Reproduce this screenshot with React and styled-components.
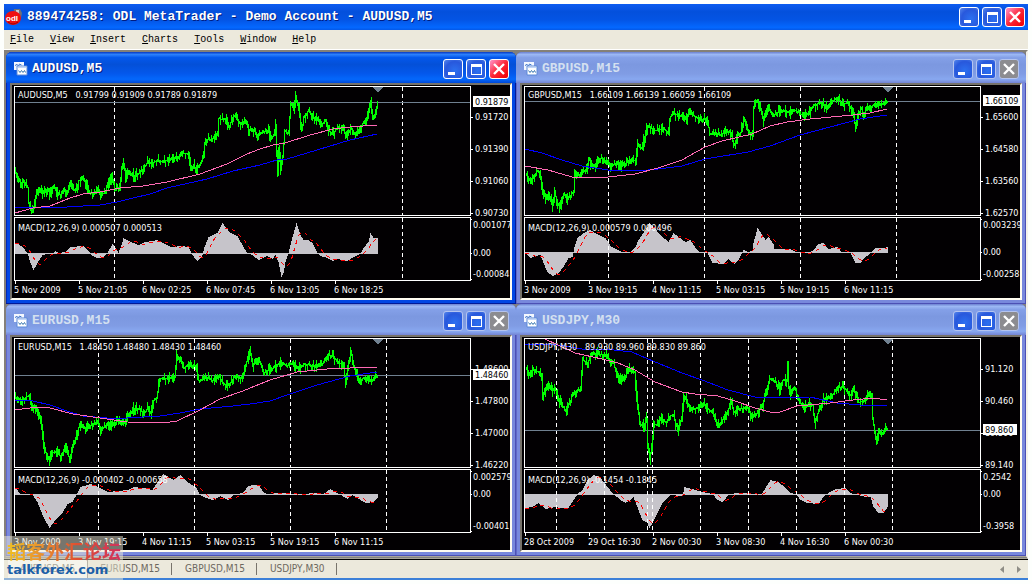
import { useState } from 'react';
import styled, { createGlobalStyle } from 'styled-components';


// all chart points are [x, y], counted from the top left corner of the price plot
const charts = [
    {
        symbol: 'AUDUSD',
        period: 'M5',
        quotes: '0.91799 0.91909 0.91789 0.91879',
        macd: '0.000507 0.000513',
        price: '0.91879',
        priceY: 16,
        scale: ['0.91720', '0.91390', '0.91060', '0.90730'],
        macdMax: '0.001077',
        macdMin: '-0.00084',
        zeroY: 167,
        dates: ['5 Nov 2009', '5 Nov 21:05', '6 Nov 02:25', '6 Nov 07:45', '6 Nov 13:05', '6 Nov 18:25'],
        separators: [100, 388],
        bars: [[1,86],[3,91],[6,97],[9,94],[11,97],[13,101],[14,117],[16,122],[19,121],[22,106],[25,104],[29,107],[33,102],[36,109],[39,99],[43,107],[46,109],[49,102],[53,106],[55,96],[59,104],[62,101],[64,94],[68,92],[71,97],[74,106],[79,107],[83,104],[86,108],[90,106],[94,96],[97,91],[100,102],[105,102],[107,82],[109,77],[111,91],[114,86],[119,89],[124,87],[128,83],[133,76],[138,77],[143,73],[146,75],[153,74],[158,71],[163,71],[168,67],[174,67],[176,82],[179,79],[181,84],[186,76],[189,69],[190,57],[193,53],[196,54],[199,51],[203,47],[204,32],[208,33],[211,32],[214,41],[218,31],[221,29],[224,36],[228,37],[231,34],[234,44],[239,44],[243,49],[246,46],[253,44],[256,51],[259,49],[261,39],[263,89],[264,61],[266,82],[268,71],[270,44],[274,47],[276,17],[279,22],[281,10],[284,22],[287,44],[289,31],[294,24],[299,31],[303,32],[306,39],[311,34],[314,44],[318,47],[323,41],[328,42],[332,51],[336,41],[340,47],[344,44],[348,37],[351,34],[354,24],[356,14],[358,32],[361,27],[363,15]],
        fast: [[1,127],[19,122],[36,120],[56,112],[69,108],[86,106],[106,102],[129,100],[153,96],[186,88],[213,78],[233,68],[246,63],[259,59],[271,57],[296,49],[319,43],[336,41],[363,39]],
        slow: [[1,121],[19,121],[53,121],[86,119],[103,116],[119,112],[136,108],[153,102],[193,93],[219,85],[246,79],[263,74],[273,73],[303,64],[336,54],[363,48]],
        histogram: [[1,157],[4,158],[9,162],[13,167],[16,177],[19,184],[23,177],[28,169],[39,167],[41,165],[44,167],[51,166],[56,161],[69,160],[74,165],[78,170],[83,172],[89,171],[93,167],[98,158],[101,162],[104,167],[107,159],[109,152],[114,155],[124,159],[131,156],[143,154],[149,157],[156,161],[168,160],[174,161],[177,167],[181,173],[183,175],[186,172],[188,169],[190,161],[194,151],[203,147],[208,137],[211,141],[216,147],[223,150],[229,161],[233,167],[238,169],[244,174],[253,170],[258,173],[261,169],[264,176],[267,191],[269,187],[271,176],[274,167],[278,151],[282,137],[286,149],[289,154],[294,154],[298,157],[303,167],[306,170],[313,172],[318,175],[323,173],[333,175],[339,171],[346,168],[349,162],[354,156],[356,147],[359,152],[363,152]],
    },
    {
        symbol: 'GBPUSD',
        period: 'M15',
        quotes: '1.66109 1.66139 1.66059 1.66109',
        macd: '0.000579 0.000496',
        price: '1.66109',
        priceY: 15,
        scale: ['1.65600', '1.64580', '1.63560', '1.62570'],
        macdMax: '0.003239',
        macdMin: '-0.00258',
        zeroY: 166,
        dates: ['3 Nov 2009', '3 Nov 19:15', '4 Nov 11:15', '5 Nov 03:15', '5 Nov 19:15', '6 Nov 11:15'],
        separators: [84, 180, 276, 372],
        bars: [[2,87],[4,94],[8,91],[13,84],[16,91],[18,104],[21,112],[24,109],[28,119],[30,107],[33,117],[36,121],[39,107],[43,112],[46,109],[49,104],[50,84],[54,89],[58,86],[62,82],[64,71],[68,82],[73,76],[77,71],[81,76],[86,80],[91,77],[96,80],[101,77],[106,74],[111,74],[113,59],[117,61],[119,54],[123,39],[129,44],[134,44],[138,41],[144,47],[145,32],[148,26],[153,29],[159,29],[162,34],[164,23],[166,27],[174,32],[183,34],[185,47],[191,47],[196,49],[200,44],[206,46],[209,59],[213,49],[216,46],[219,32],[223,44],[228,49],[229,21],[231,14],[234,17],[239,34],[243,19],[248,29],[256,24],[266,26],[271,24],[278,29],[284,26],[289,19],[296,16],[303,21],[308,14],[313,12],[318,18],[323,16],[328,26],[331,42],[334,27],[337,21],[339,31],[341,21],[346,21],[351,17],[358,17],[363,15]],
        fast: [[1,80],[24,84],[48,91],[64,92],[84,91],[111,88],[134,82],[158,74],[181,61],[198,55],[228,48],[246,40],[263,36],[286,33],[329,29],[346,27],[363,23]],
        slow: [[1,63],[18,67],[38,74],[58,80],[84,84],[114,85],[134,83],[158,80],[181,73],[224,66],[246,60],[276,49],[306,41],[336,33],[363,29]],
        histogram: [[1,167],[6,172],[11,170],[16,169],[19,177],[23,186],[28,190],[34,187],[39,181],[44,172],[48,171],[50,161],[53,152],[59,147],[66,144],[74,149],[81,152],[86,160],[91,163],[98,166],[106,166],[111,161],[114,154],[121,144],[125,137],[129,141],[136,149],[144,156],[149,147],[154,151],[161,156],[166,154],[171,162],[176,167],[183,167],[188,177],[199,178],[204,173],[210,178],[214,174],[219,164],[224,166],[228,164],[229,157],[233,142],[236,146],[241,154],[244,151],[249,158],[250,163],[266,163],[273,167],[284,167],[289,164],[294,158],[299,157],[304,163],[313,161],[318,167],[326,167],[331,177],[336,177],[339,173],[346,167],[351,162],[359,162],[363,161]],
    },
    {
        symbol: 'EURUSD',
        period: 'M15',
        quotes: '1.48450 1.48480 1.48430 1.48460',
        macd: '-0.000402 -0.000658',
        price: '1.48460',
        priceY: 37,
        scale: ['1.48600', '1.47800', '1.47000', '1.46220'],
        macdMax: '0.002579',
        macdMin: '-0.00401',
        zeroY: 156,
        dates: ['3 Nov 2009', '3 Nov 19:15', '4 Nov 11:15', '5 Nov 03:15', '5 Nov 19:15', '6 Nov 11:15'],
        separators: [84, 180, 276, 372],
        bars: [[1,59],[6,62],[11,59],[14,57],[17,67],[21,70],[25,79],[28,95],[29,110],[35,122],[38,114],[43,112],[46,120],[51,105],[55,122],[58,109],[61,99],[65,85],[69,90],[74,89],[78,85],[83,85],[86,92],[91,87],[98,87],[103,82],[109,85],[114,77],[119,70],[124,70],[129,75],[133,70],[136,75],[139,62],[142,59],[145,40],[153,40],[160,38],[162,17],[166,22],[169,30],[174,25],[182,29],[184,42],[191,39],[198,42],[204,37],[208,45],[214,47],[219,39],[228,39],[231,27],[235,12],[238,27],[243,20],[246,25],[249,35],[253,32],[258,30],[264,25],[273,27],[278,25],[284,30],[289,26],[303,27],[308,25],[313,17],[318,17],[323,24],[326,25],[329,29],[331,46],[333,32],[336,12],[339,27],[342,35],[344,42],[349,40],[353,39],[357,42],[361,37],[363,38]],
        fast: [[1,72],[23,69],[36,70],[59,76],[86,80],[113,84],[149,85],[163,83],[186,72],[206,61],[229,53],[236,50],[256,42],[283,34],[313,31],[336,30],[363,29]],
        slow: [[1,62],[19,63],[36,67],[53,73],[69,78],[93,80],[113,80],[146,78],[166,75],[186,71],[219,68],[236,66],[256,63],[276,56],[303,47],[336,38],[363,34]],
        histogram: [[1,150],[6,156],[18,157],[23,164],[29,179],[35,190],[41,182],[48,175],[53,166],[58,164],[63,155],[66,149],[76,146],[84,149],[93,154],[103,153],[113,152],[119,149],[129,150],[138,152],[143,144],[149,136],[154,139],[159,142],[166,137],[173,144],[182,150],[185,156],[189,159],[198,162],[206,158],[214,162],[219,157],[228,155],[234,148],[239,147],[244,147],[249,154],[253,156],[266,155],[286,156],[303,155],[309,156],[316,151],[321,154],[325,156],[333,161],[338,157],[343,160],[351,165],[359,164],[363,160]],
    },
    {
        symbol: 'USDJPY',
        period: 'M30',
        quotes: '89.930 89.960 89.830 89.860',
        macd: '-0.1454 -0.1845',
        price: '89.860',
        priceY: 92,
        scale: ['91.120', '90.460', '89.800', '89.140'],
        macdMax: '0.2542',
        macdMin: '-0.3958',
        zeroY: 156,
        dates: ['28 Oct 2009', '29 Oct 16:30', '2 Nov 00:30', '3 Nov 08:30', '4 Nov 16:30', '6 Nov 00:30'],
        separators: [32, 80, 123, 128, 176, 224, 272, 320, 368],
        bars: [[2,29],[4,37],[8,30],[14,34],[17,37],[18,57],[23,47],[28,52],[32,52],[34,62],[41,72],[46,62],[48,54],[56,50],[58,22],[63,24],[66,17],[73,15],[81,17],[84,22],[89,25],[93,39],[98,42],[101,37],[104,30],[110,34],[112,59],[115,85],[119,87],[122,80],[123,105],[125,121],[127,109],[129,85],[133,87],[136,79],[141,84],[146,77],[149,77],[153,92],[157,79],[159,57],[162,62],[166,72],[173,69],[178,65],[183,70],[188,74],[194,89],[199,79],[203,74],[206,62],[209,74],[214,70],[224,70],[227,79],[233,74],[238,67],[241,54],[245,40],[250,42],[255,52],[258,42],[262,42],[263,23],[264,50],[266,55],[270,49],[274,62],[279,69],[284,65],[288,67],[290,84],[294,72],[299,60],[306,59],[313,49],[319,48],[325,57],[329,52],[334,64],[339,62],[344,55],[347,55],[348,80],[350,94],[352,102],[354,92],[358,95],[361,89],[363,90]],
        fast: [[21,1],[34,7],[51,15],[78,21],[94,25],[111,32],[131,44],[158,54],[171,56],[194,58],[211,63],[231,70],[246,74],[256,74],[273,68],[306,65],[329,62],[349,60],[363,62]],
        slow: [[1,6],[24,6],[41,8],[58,11],[81,11],[108,14],[124,21],[158,35],[178,42],[204,52],[231,59],[251,60],[286,59],[313,65],[336,67],[363,68]],
        histogram: [[1,170],[8,169],[14,165],[21,171],[31,169],[43,171],[46,167],[49,162],[54,155],[58,152],[63,142],[69,137],[76,140],[83,149],[89,156],[96,162],[101,165],[106,162],[109,159],[114,172],[118,182],[123,185],[125,190],[128,185],[133,175],[138,165],[146,157],[158,158],[160,149],[168,151],[178,154],[188,156],[193,162],[198,164],[204,157],[211,155],[224,155],[229,156],[237,156],[241,150],[246,142],[254,144],[261,150],[266,155],[272,156],[276,162],[283,165],[294,166],[299,159],[304,155],[311,151],[321,150],[326,155],[334,157],[341,159],[346,159],[349,169],[354,175],[359,175],[363,169]],
    },
];

const menu = ['File', 'View', 'Insert', 'Charts', 'Tools', 'Window', 'Help'];
const tabs = ['AUDUSD,M5', 'EURUSD,M15', 'GBPUSD,M15', 'USDJPY,M30'];

const valueAt = (points, x) => {
    const next = points.findIndex((p) => p[0] >= x);
    if (next === 0) return points[0][1];
    if (next === -1) return points[points.length - 1][1];
    const [x1, y1] = points[next - 1];
    const [x2, y2] = points[next];
    return y1 + ((y2 - y1) * (x - x1)) / (x2 - x1);
};

// length of the wick of a bar, the same on every render
const wick = (n) => {
    const r = Math.abs(Math.sin(n * 12.9898) * 43758.5453) % 1;
    return Math.round(r * r * 6);
};

const barsPath = (points) => {
    let d = '';
    for (let x = points[0][0]; x <= 363; x++) {
        const a = Math.round(valueAt(points, x - 1));
        const b = Math.round(valueAt(points, x));
        const top = Math.min(a, b) - wick(x);
        const bottom = Math.max(a, b) + 1 + wick(x + 500);
        d += `M${x} ${Math.max(top, 1)}h1V${Math.min(bottom, 128)}h-1z`;
    }
    return d;
};

const histogramPath = (points, zeroY) => {
    let d = '';
    for (let x = 1; x <= 363; x++) {
        const y = Math.round(valueAt(points, x));
        d += `M${x} ${Math.min(y, zeroY)}h1V${Math.max(y, zeroY + 1)}h-1z`;
    }
    return d;
};

const signalPath = (points) => {
    const list = [];
    for (let x = 1; x <= 363; x += 2) {
        let sum = 0;
        for (let i = 0; i < 12; i++) sum += valueAt(points, Math.max(1, x - i));
        list.push(`${x},${Math.round(sum / 12)}`);
    }
    return list.join(' ');
};

const Chart = ({ chart }) => {
    const priceLabelWidth = chart.price.length > 6 ? 38 : 34;

    return (
        <ChartSvg viewBox="-2 -1 498 213" role="img" aria-label={`${chart.symbol},${chart.period}`}>
            <g shapeRendering="crispEdges" fill="none">
                <path d={histogramPath(chart.histogram, chart.zeroY)} fill="#c6c4ca" />
                <polyline points={signalPath(chart.histogram)} stroke="#ff0000" strokeDasharray="4 4" />
                {chart.separators.map((x) => (
                    <path key={x} d={`M${x + 0.5} 1V129M${x + 0.5} 132V194`} stroke="#ffffff" strokeDasharray="4 3" />
                ))}
                <path d={`M1 ${chart.priceY + 0.5}H456`} stroke="#708090" />
                <path d={barsPath(chart.bars)} fill="#00ff00" />
                <polyline points={chart.slow.join(' ')} stroke="#0000ff" />
                <polyline points={chart.fast.join(' ')} stroke="#ff69b4" />
                <path d="M358 1h11l-5 5h-1z" fill="#708090" />
                <rect x="0.5" y="0.5" width="456" height="129" stroke="#ffffff" />
                <rect x="0.5" y="131.5" width="456" height="63" stroke="#ffffff" />
                <path d={`M457 31.5h2M457 63.5h2M457 95.5h2M457 127.5h2M457 133.5h1M457 ${chart.zeroY + 0.5}h1M457 193.5h1`} stroke="#ffffff" />
                {chart.dates.map((date, i) => (
                    <path key={date} d={`M${i * 64 + 1.5} 195v3`} stroke="#ffffff" />
                ))}
            </g>

            <ChartText x="4" y="12">{chart.symbol},{chart.period}{'\u00a0\u00a0\u00a0'}{chart.quotes}</ChartText>
            <ChartText x="4" y="145">MACD(12,26,9) {chart.macd}</ChartText>

            {chart.scale.map((label, i) => (
                <ChartText key={label} x="461" y={34 + i * 32}>{label}</ChartText>
            ))}
            <ChartText x="459" y="142">{chart.macdMax}</ChartText>
            <ChartText x="459" y={chart.zeroY + 3}>0.00</ChartText>
            <ChartText x="459" y="191">{chart.macdMin}</ChartText>
            {chart.dates.map((date, i) => (
                <ChartText key={date} x={i * 64} y="207">{date}</ChartText>
            ))}

            <rect x="459" y={chart.priceY - 6} width={priceLabelWidth} height="11" fill="#ffffff" />
            <ChartText x="461" y={chart.priceY + 3} $dark>{chart.price}</ChartText>
        </ChartSvg>
    );
};

const Controls = ({ name, active }) => (
    <ButtonRow>
        <CaptionButton type="button" aria-label={`Minimize ${name}`} $active={active}>
            <svg width="18" height="18"><path d="M4 12h7v3H4z" fill="#fff" /></svg>
        </CaptionButton>
        <CaptionButton type="button" aria-label={`Maximize ${name}`} $active={active}>
            <svg width="18" height="18"><path fillRule="evenodd" d="M4 4h11v11H4zM5 7v7h9V7z" fill="#fff" /></svg>
        </CaptionButton>
        <CaptionButton type="button" aria-label={`Close ${name}`} $active={active} $close>
            <svg width="18" height="18"><path d="M4 4l10 10M14 4L4 14" stroke="#fff" strokeWidth="2.4" /></svg>
        </CaptionButton>
    </ButtonRow>
);

const ChartIcon = () => (
    <svg width="14" height="14" aria-hidden="true">
        <path d="M0 0h10v8H0z" fill="#f4f8ff" />
        <path d="M1.5 4l1-2 2 2 1-2 2 1" stroke="#3f74c8" fill="none" />
        <path d="M3 4h10v9H3z" fill="#fff" stroke="#5c8ad8" />
        <path d="M4 5h8v1H4z" fill="#c4d8f8" />
        <path d="M4.5 8.5l1.5 2 1.5-2 1.5 2 1.5-2 1 2" stroke="#3a78b0" fill="none" />
    </svg>
);

const AppIcon = () => (
    <svg width="18" height="18" aria-hidden="true">
        <path d="M9 1h6l2 4-1 5-4 2-4-3z" fill="#6c7078" />
        <path d="M11 2l3 0 0 4-3 1z" fill="#c8ccd0" />
        <ellipse cx="8" cy="10" rx="8" ry="7" fill="#f01010" />
        <path d="M3 14q5 4 10 0" stroke="#a00000" fill="none" />
        <AppIconText x="1" y="13">odl</AppIconText>
    </svg>
);

const App = () => {
    const [activeTab, setActiveTab] = useState('AUDUSD,M5');

    return (
        <>
            <GlobalStyle />
            <Page>
                <AppTitle>
                    <AppIcon />
                    <AppName>889474258: ODL MetaTrader - Demo Account - AUDUSD,M5</AppName>
                    <Controls name="ODL MetaTrader" active />
                </AppTitle>

                <Menu>
                    {menu.map((item) => (
                        <MenuItem key={item} type="button"><u>{item[0]}</u>{item.slice(1)}</MenuItem>
                    ))}
                </Menu>

                <Workspace>
                    {charts.map((chart) => {
                        const name = `${chart.symbol},${chart.period}`;
                        const active = name === activeTab;
                        return (
                            <Window key={name} $active={active}>
                                <WindowTitle $active={active}>
                                    <ChartIcon />
                                    <WindowName $active={active}>{name}</WindowName>
                                    <Controls name={name} active={active} />
                                </WindowTitle>
                                <ChartFrame>
                                    <Chart chart={chart} />
                                </ChartFrame>
                            </Window>
                        );
                    })}
                </Workspace>

                <TabBar>
                    {tabs.map((tab) => (
                        <Tab key={tab} type="button" $active={tab === activeTab} onClick={() => { setActiveTab(tab) }}>{tab}</Tab>
                    ))}
                    <Scroll>
                        <ScrollButton type="button" aria-label="Scroll left">
                            <svg width="4" height="7"><path d="M4 0v7L0 3.5z" fill="#8f8d86" /></svg>
                        </ScrollButton>
                        <ScrollButton type="button" aria-label="Scroll right">
                            <svg width="4" height="7"><path d="M0 0v7l4-3.5z" fill="#8f8d86" /></svg>
                        </ScrollButton>
                    </Scroll>
                </TabBar>

                <Watermark>
                    <WatermarkName>韬客外汇论坛</WatermarkName>
                    <WatermarkSite>talkforex.com</WatermarkSite>
                </Watermark>
            </Page>
        </>
    );
};

const GlobalStyle = createGlobalStyle`
* {
box-sizing: border-box;
}

body {
margin: 0;
background: #fdfffd;
}
`;

const Page = styled.div`
position: relative;
padding: 4px;
`;

const AppTitle = styled.header`
display: flex;
align-items: center;
gap: 4px;
height: 26px;
padding: 0 3px 0 1px;
background: linear-gradient(#0c5cf0 0%, #0450dc 30%, #0454e4 60%, #0468ff 90%, #0458e8 100%);
`;

const AppName = styled.h1`
flex: 1;
min-width: 0;
margin: 0;
overflow: hidden;
white-space: nowrap;
font-family: 'Liberation Mono', monospace;
font-size: 13px;
line-height: 16px;
font-weight: 700;
color: #ffffff;
text-shadow: 1px 1px #001c80;
`;

const AppIconText = styled.text`
font-family: 'Liberation Sans', sans-serif;
font-size: 8px;
font-weight: 700;
fill: #ffffff;
`;

const Menu = styled.nav`
display: flex;
align-items: center;
height: 20px;
background: #ece9dc;
border-bottom: 1px solid #ffffff;
`;

const MenuItem = styled.button`
margin: 0;
padding: 0 10px 0 6px;
border: 0;
background: none;
font-family: 'Liberation Mono', monospace;
font-size: 10px;
line-height: 16px;
color: #000000;
`;

const Workspace = styled.main`
display: grid;
grid-template-columns: repeat(2, minmax(0, 1fr));
background: #808080;
border: 2px solid #848078;
border-right-color: #f4f2ea;
border-bottom: 3px double #a8a498;
`;

const Window = styled.section`
display: flex;
flex-direction: column;
padding: 0 4px 4px;
border-radius: 6px 6px 0 0;
background: ${(props) => props.$active ? '#0046e4' : '#7888dc'};
box-shadow: inset -1px -1px ${(props) => props.$active ? '#001a98' : '#4c50b4'}, inset 1px 0 ${(props) => props.$active ? '#0028b8' : '#6068c8'};
`;

const WindowTitle = styled.header`
display: flex;
align-items: center;
gap: 4px;
height: 31px;
margin: 0 -4px;
padding: 3px 7px 0 8px;
border-radius: 6px 6px 0 0;
background: ${(props) => props.$active
        ? 'linear-gradient(#0838c0 0%, #2c80fc 8%, #0458ec 18%, #0450d8 40%, #0458ec 70%, #0468fc 88%, #0048d8 100%)'
        : 'linear-gradient(#6c80d0 0%, #9cb8f4 8%, #84a0e8 18%, #7c98e0 40%, #809ce4 70%, #88a8f0 88%, #7484d4 100%)'};
`;

const WindowName = styled.h2`
flex: 1;
min-width: 0;
margin: 0;
overflow: hidden;
white-space: nowrap;
font-family: 'Liberation Mono', monospace;
font-size: 13px;
line-height: 16px;
font-weight: 700;
color: ${(props) => props.$active ? '#ffffff' : '#d4e0f0'};
text-shadow: ${(props) => props.$active ? '1px 1px #001c80' : 'none'};
`;

const ButtonRow = styled.div`
display: flex;
gap: 3px;
`;

const CaptionButton = styled.button`
display: flex;
align-items: center;
justify-content: center;
width: 20px;
height: 20px;
padding: 0;
border: 1px solid ${(props) => props.$active ? '#ffffff' : '#b4c4f0'};
border-radius: 3px;
background: ${(props) => {
        if (!props.$close) return 'radial-gradient(circle at 60% 60%, #2c70f0, #2858dc 60%, #5888ec)';
        return props.$active ? 'linear-gradient(135deg, #ff80b0 10%, #fc2838 50%, #f00000)' : '#8c8c90';
    }};
`;

const ChartFrame = styled.div`
border: 2px solid;
border-color: #76726a #fffcf0 #fffcf0 #76726a;
background: #000000;
`;

const ChartSvg = styled.svg`
display: block;
width: 100%;
height: auto;
background: #020002;
`;

const ChartText = styled.text`
font-family: 'DejaVu Sans Condensed', 'DejaVu Sans', sans-serif;
font-size: 9px;
fill: ${(props) => props.$dark ? '#000000' : '#ffffff'};
`;

const TabBar = styled.footer`
display: flex;
align-items: stretch;
height: 21px;
padding-left: 4px;
background: #ece9dc;
border-top: 1px solid #000000;
border-bottom: 2px solid #3c80d8;
`;

const Tab = styled.button`
margin: 0;
padding: 0 12px;
border: 0;
border-right: 1px solid ${(props) => props.$active ? '#848078' : 'transparent'};
background: ${(props) => props.$active ? '#ffffff' : 'linear-gradient(#78746c, #78746c) right center / 1px 12px no-repeat'};
font-family: 'DejaVu Sans Condensed', 'DejaVu Sans', sans-serif;
font-size: 10px;
line-height: 16px;
color: #6c6860;
`;

const Scroll = styled.div`
display: flex;
align-items: center;
gap: 5px;
margin-left: auto;
padding-right: 3px;
`;

const ScrollButton = styled.button`
display: flex;
padding: 0 4px;
border: 0;
background: none;
`;

// lies over the lower left chart and the first tab
const Watermark = styled.div`
position: absolute;
left: 4px;
bottom: 4px;
display: flex;
flex-direction: column;
padding: 4px 0 2px 3px;
width: 119px;
height: 44px;
background: rgba(236, 233, 216, 0.5);
pointer-events: none;
`;

const WatermarkName = styled.div`
font-family: 'Noto Sans CJK SC', sans-serif;
font-size: 19px;
line-height: 22px;
font-weight: 700;
white-space: nowrap;
color: transparent;
background: linear-gradient(90deg, #f0c020 0%, #e89030 30%, #e05030 60%, #d03060 100%);
background-clip: text;
`;

const WatermarkSite = styled.div`
font-family: 'DejaVu Sans', sans-serif;
font-size: 13px;
line-height: 16px;
font-weight: 700;
color: #1c60a8;
`;

export default App;
